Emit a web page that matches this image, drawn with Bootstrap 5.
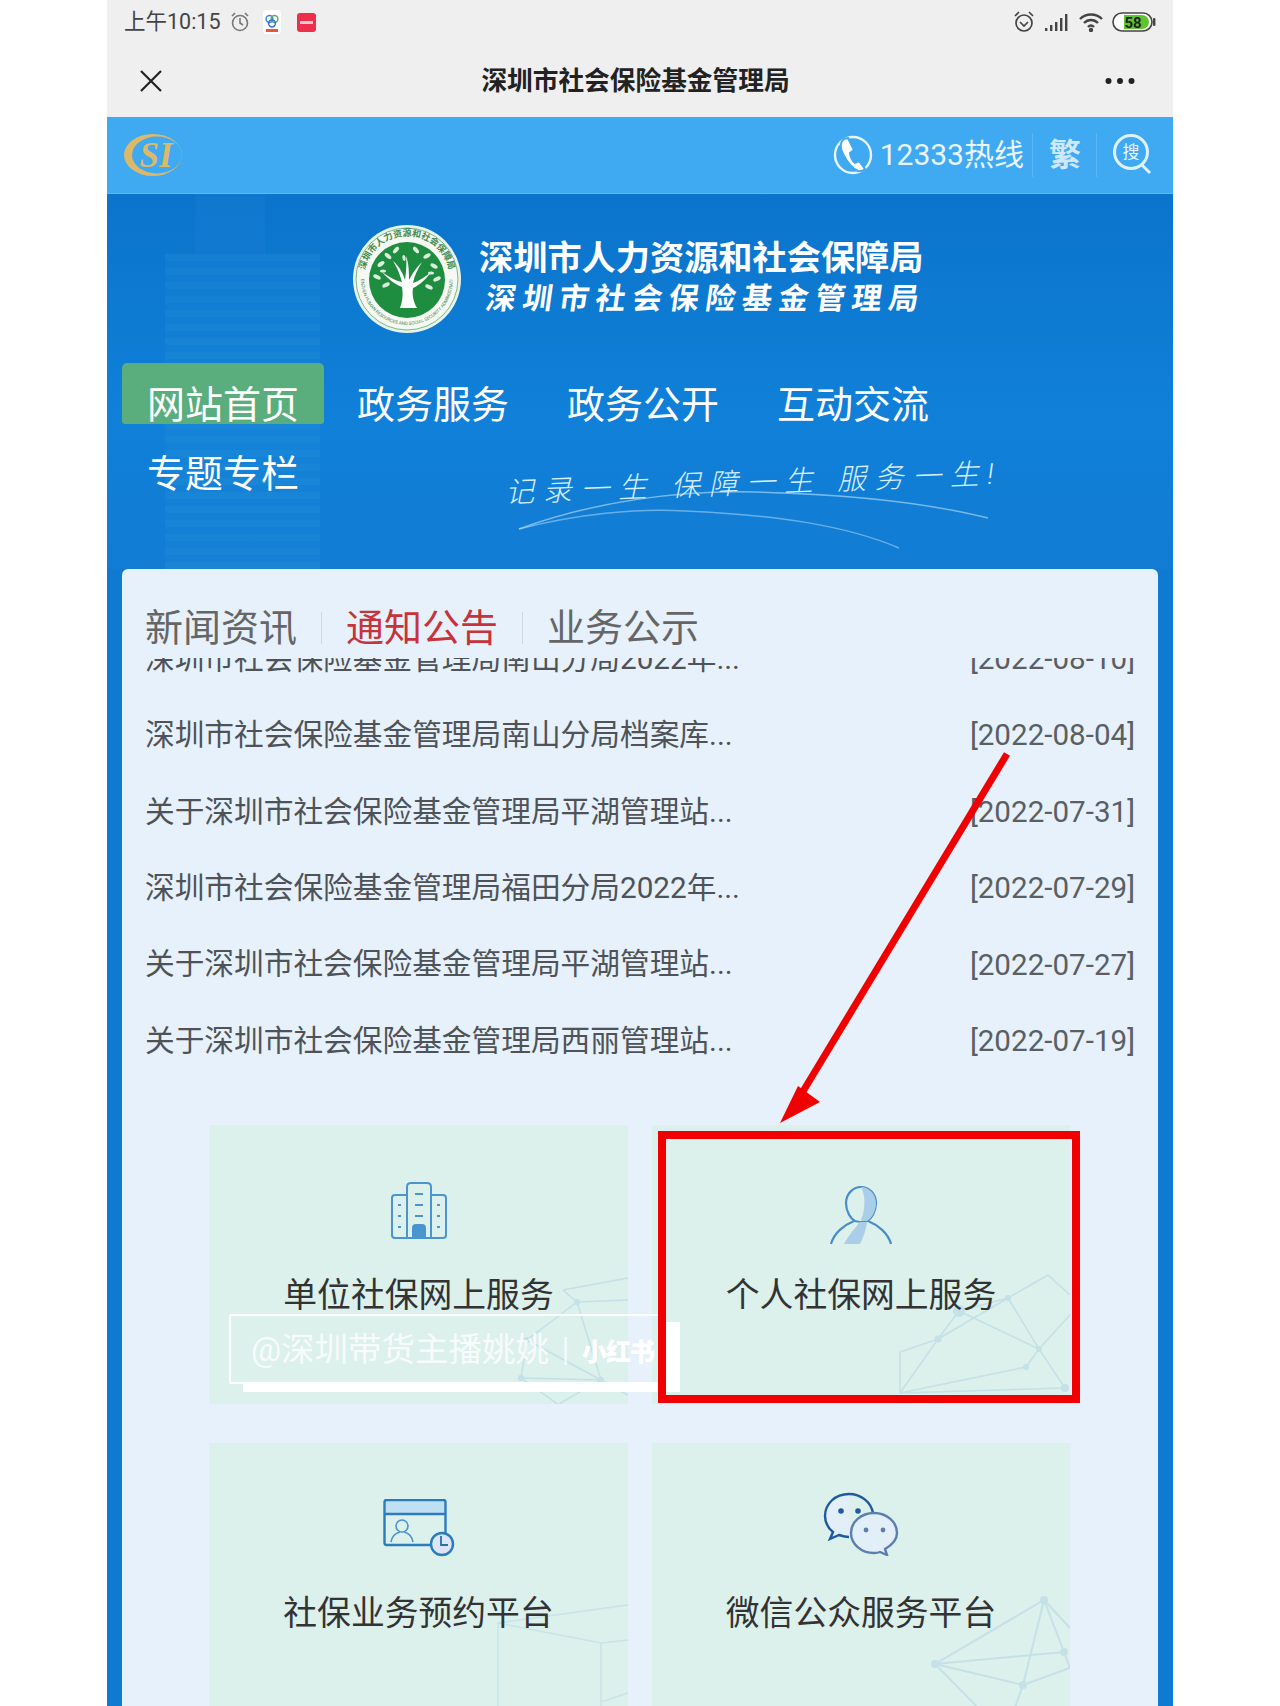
<!DOCTYPE html>
<html lang="zh-CN">
  <head>
    <meta charset="UTF-8" />
    <meta name="viewport" content="width=device-width, initial-scale=1.0" />
    <title>深圳市社会保险基金管理局</title>
    <link href="https://cdn.jsdelivr.net/npm/bootstrap@5.3.2/dist/css/bootstrap.min.css" rel="stylesheet" />
    <style>
      html, body { height: 1706px; overflow: hidden; background: #fff; }
      body { font-family: Roboto, "Noto Sans CJK SC", sans-serif; }
      .phone { position: relative; width: 1066px; height: 1706px; margin: 0 auto; overflow: hidden; background: #0f7ad2; }

      .status-bar { height: 44px; padding: 0 17px; background: #efefef; color: #444; font-size: 21.5px; }
      .status-bar svg { display: block; }
      .title-bar { height: 73px; padding: 0 38px 0 32px; background: #efefef; }
      .title-bar h1 { margin: 2px 0 0 3px; font-size: 25.7px; font-weight: 700; color: #222; }

      .top-bar { height: 77px; padding: 0 20px 0 14px; background: #3fa9f1; border-bottom: 1px solid #62baf5; color: #e9f6ff; }
      .hotline { font-size: 30px; line-height: 1; margin: 0 8px 0 7px; }
      .bar-sep { width: 1px; height: 44px; background: #5cb6f3; }
      .trad { font-size: 32px; font-weight: 700; color: #cfe8fb; margin: 0 15px 0 16px; line-height: 1; }

      .hero { position: relative; height: 375px; padding-top: 31px; background: linear-gradient(180deg, #0b74cc 0%, #1080d8 60%, #127cd4 100%); }
      .hero-towers { position: absolute; left: 58px; top: 60px; width: 155px; height: 320px; opacity: .13;
        background: repeating-linear-gradient(180deg, #49b4d8 0 7px, #2a94d8 7px 14px); }
      .hero-tower-top { position: absolute; left: 88px; top: 0; width: 70px; height: 60px; background: #2a8ad8; opacity: .16; }
      .brand { position: relative; gap: 18px; margin-left: 246px; height: 108px; }
      .brand-names { color: #fff; }
      .brand-name-a { font-size: 34.2px; font-weight: 700; line-height: 40px; }
      .brand-name-b { font-size: 30px; font-weight: 700; line-height: 42px; letter-spacing: 6.6px; margin-left: 4px; transform: skewX(-8deg); transform-origin: left bottom; }

      .main-nav { position: relative; width: 900px; margin: 30px 0 0 15px; }
      .main-nav .nav-link { width: 202px; height: 61px; margin: 0 8px 8px 0; padding: 20px 0 0 25px; border-radius: 5px 5px 3px 3px;
        color: #fff; font-size: 38px; line-height: 44px; white-space: nowrap; }
      .main-nav .nav-link.active { background: #5aad7c; color: #fff; }
      .slogan { position: absolute; left: 398px; top: 268px; color: #d8effc; font-size: 29px; font-weight: 300; font-style: italic; letter-spacing: 8.6px; white-space: nowrap; transform: rotate(-2.2deg); }
      .swoosh { position: absolute; left: 400px; top: 270px; }

      .board { position: relative; width: 1036px; height: 1200px; margin-left: 15px; padding: 39px 23px 0 23px; border-radius: 6px 6px 0 0; background: #e6f1fb; }
      .board-tabs { height: 40px; gap: 0; }
      .board-tabs span { font-size: 38px; line-height: 40px; color: #666; }
      .board-tabs .is-on { color: #c8323a; }
      .tab-sep { width: 1px; height: 32px; margin: 0 24px 0 24px; background: #cdd8e2; }
      .notice-clip { height: 420px; margin-top: 10px; overflow: hidden; }
      .notice-list { margin-top: -37px; background: transparent; }
      .notice-list .list-group-item { display: flex; justify-content: space-between; align-items: center; height: 76.4px; padding: 0; background: transparent; border: 0; color: #4f5357; font-size: 29.7px; }
      .notice-date { font-size: 29.6px; color: #5a5f64; }

      .services { display: grid; grid-template-columns: 419px 418px; gap: 39px 24px; margin: 47px 0 0 64px; }
      .service { position: relative; height: 279px; padding-top: 52px; background: #dcf0ec; overflow: hidden; }
      .service-net { position: absolute; left: 0; top: 0; opacity: .7; }
      .service-icon { position: relative; height: 64px; margin-bottom: 25px; }
      .icon-up { margin-top: -3px; }
      .service-name { position: relative; font-size: 33.8px; line-height: 60px; color: #333; }

      .annot { position: absolute; left: 0; top: 0; }
      .stamp { position: absolute; left: 122px; top: 1314px; width: 437px; height: 70px; padding-left: 20px; border: 2px solid rgba(255,255,255,.9); box-shadow: 14px 8px 0 #fff;
        color: rgba(255,255,255,.8); font-size: 33.5px; line-height: 68px; white-space: nowrap; }
      .stamp b { font-size: 25px; color: #fff; font-weight: 900; letter-spacing: -1px; }
    </style>
  </head>
  <body>
    <div class="phone">
      <!-- status bar -->
      <div class="status-bar d-flex align-items-center justify-content-between">
        <div class="d-flex align-items-center gap-2">
          <span>上午10:15</span>
          <svg width="22" height="22" viewBox="0 0 22 22" fill="none" stroke="#777" stroke-width="1.6"><circle cx="11" cy="12" r="7.5"/><path d="M11 7v5l3 2M3 5l3-3M19 5l-3-3"/></svg>
          <svg width="18" height="24" viewBox="0 0 18 24" class="ms-1"><rect width="18" height="24" rx="4" fill="#fff"/><circle cx="6.5" cy="9" r="3.4" fill="none" stroke="#3a8ad8" stroke-width="1.5"/><circle cx="11.5" cy="9" r="3.4" fill="none" stroke="#5ab06a" stroke-width="1.5"/><circle cx="9" cy="13.5" r="3.4" fill="none" stroke="#3a6ad8" stroke-width="1.5"/><rect x="3" y="19" width="12" height="3" fill="#e2593c"/></svg>
          <svg class="ms-2" width="19" height="19" viewBox="0 0 19 19"><rect width="19" height="19" rx="3" fill="#ee2f4c"/><rect x="3" y="8" width="13" height="3" fill="#fbc6cf"/></svg>
        </div>
        <div class="d-flex align-items-center">
          <svg width="24" height="24" viewBox="0 0 24 24" fill="none" stroke="#444" stroke-width="1.7"><circle cx="12" cy="13" r="8"/><path d="M8 12l4 4 4-4M3 6l4-4M21 6l-4-4"/></svg>
          <svg class="ms-2" width="26" height="18" viewBox="0 0 26 18" fill="#444"><rect x="1" y="15" width="2.4" height="3"/><rect x="6" y="12" width="2.4" height="6"/><rect x="11" y="9" width="2.4" height="9"/><rect x="16" y="5" width="2.4" height="13"/><rect x="21" y="1" width="2.4" height="17"/></svg>
          <svg class="ms-2" width="26" height="20" viewBox="0 0 26 20" fill="none" stroke="#444" stroke-width="2.4"><path d="M2 7c6-6 16-6 22 0M6 11c4-4 10-4 14 0M10 15c2-2 4-2 6 0"/><circle cx="13" cy="18" r="1" fill="#444"/></svg>
          <svg class="ms-2" width="44" height="20" viewBox="0 0 44 20"><rect x="1" y="1" width="39" height="18" rx="9" fill="#fff" stroke="#444" stroke-width="1.6"/><path d="M12 3h18a7 7 0 0 1 0 14H12z" fill="#5fc52e"/><rect x="41" y="6" width="2.4" height="8" rx="1" fill="#444"/><text x="21" y="15.5" text-anchor="middle" font-size="15" font-weight="700" font-family="Roboto" fill="#222">58</text></svg>
        </div>
      </div>

      <!-- wechat title bar -->
      <div class="title-bar d-flex align-items-center justify-content-between">
        <svg width="24" height="24" viewBox="0 0 24 24" stroke="#222" stroke-width="2.2"><path d="M2 2l20 20M22 2L2 22"/></svg>
        <h1>深圳市社会保险基金管理局</h1>
        <svg width="30" height="8" viewBox="0 0 30 8" fill="#222"><circle cx="3.5" cy="4" r="3"/><circle cx="15" cy="4" r="3"/><circle cx="26.5" cy="4" r="3"/></svg>
      </div>

      <!-- site top bar -->
      <div class="top-bar d-flex align-items-center">
        <svg width="64" height="48" viewBox="0 0 64 48">
          <ellipse cx="32" cy="24" rx="29" ry="21" fill="#dcb968"/>
          <ellipse cx="36" cy="24" rx="25" ry="18.5" fill="#3fa9f1"/>
          <text x="35" y="36" text-anchor="middle" font-size="35" font-weight="700" font-style="italic" font-family="Liberation Serif" fill="#dcb968">SI</text>
        </svg>
        <div class="ms-auto d-flex align-items-center">
          <svg width="40" height="40" viewBox="0 0 40 40" fill="none">
            <circle cx="20" cy="20" r="18" stroke="#e9f6ff" stroke-width="2.4"/>
            <path d="M11 4c-4 3-4 9-1 15s8 14 15 17c3 1 5 0 7-2l-6-8-4 2c-2-1-5-7-5-10l4-3-6-12z" fill="#fff" stroke="#3fa9f1" stroke-width="2"/>
          </svg>
          <span class="hotline">12333热线</span>
          <span class="bar-sep"></span>
          <span class="trad">繁</span>
          <span class="bar-sep"></span>
          <svg class="ms-3" width="40" height="44" viewBox="0 0 40 44" fill="none">
            <circle cx="18" cy="19" r="16.5" stroke="#dff1fd" stroke-width="3"/>
            <path d="M29 32l8 8" stroke="#dff1fd" stroke-width="3"/>
            <text x="18" y="25" text-anchor="middle" font-size="17" font-family="Noto Sans CJK SC" fill="#e9f6ff">搜</text>
          </svg>
        </div>
      </div>

      <!-- hero -->
      <div class="hero">
        <div class="hero-towers"></div>
        <div class="hero-tower-top"></div>
        <div class="brand d-flex align-items-center">
          <svg width="108" height="108" viewBox="0 0 108 108">
            <defs><path id="ringTop" d="M11 54a43 43 0 0 1 86 0"/><path id="ringBot" d="M8 54a46 46 0 0 0 92 0"/></defs>
            <circle cx="54" cy="54" r="54" fill="#e8f3ea"/>
            <circle cx="54" cy="54" r="51" fill="#f6f8f3" stroke="#7cb98a" stroke-width="1"/>
            <text font-size="9" font-weight="700" fill="#3f8a52" font-family="Noto Sans CJK SC"><textPath href="#ringTop" startOffset="50%" text-anchor="middle">深圳市人力资源和社会保障局</textPath></text>
            <text font-size="4.6" fill="#3f8a52" font-family="Roboto"><textPath href="#ringBot" startOffset="50%" text-anchor="middle">SHENZHEN HUMAN RESOURCES AND SOCIAL SECURITY ADMINISTRATION</textPath></text>
            <circle cx="54" cy="55" r="38" fill="#1f8d3f"/>
            <path d="M47 83c3-8 3-15 2-21-6-2-14-8-20-15 7 5 14 9 20 10-2-7-4-13-9-21 7 6 10 13 12 19 1-8 2-15 1-24 3 8 3 17 3 24 3-6 7-12 13-18-4 7-8 14-9 21 6-2 12-6 19-12-5 7-12 14-19 17-1 6 0 13 4 20z" fill="#fff"/>
            <g fill="#d9efdb">
              <ellipse cx="28" cy="39" rx="4" ry="2" transform="rotate(-35 28 39)"/><ellipse cx="35" cy="31" rx="4" ry="2" transform="rotate(40 35 31)"/><ellipse cx="43" cy="25" rx="4" ry="2" transform="rotate(-50 43 25)"/><ellipse cx="63" cy="25" rx="4" ry="2" transform="rotate(50 63 25)"/><ellipse cx="74" cy="31" rx="4" ry="2" transform="rotate(-30 74 31)"/><ellipse cx="81" cy="41" rx="4" ry="2" transform="rotate(30 81 41)"/><ellipse cx="24" cy="52" rx="4" ry="2" transform="rotate(25 24 52)"/><ellipse cx="84" cy="54" rx="4" ry="2" transform="rotate(-25 84 54)"/><ellipse cx="33" cy="60" rx="4" ry="2" transform="rotate(-25 33 60)"/><ellipse cx="76" cy="62" rx="4" ry="2" transform="rotate(25 76 62)"/><ellipse cx="30" cy="46" rx="3" ry="1.6"/><ellipse cx="78" cy="48" rx="3" ry="1.6"/><ellipse cx="51" cy="33" rx="3" ry="1.6" transform="rotate(80 51 33)"/>
            </g>
          </svg>
          <div class="brand-names">
            <div class="brand-name-a">深圳市人力资源和社会保障局</div>
            <div class="brand-name-b">深圳市社会保险基金管理局</div>
          </div>
        </div>

        <nav class="main-nav nav">
          <a class="nav-link active" href="#">网站首页</a>
          <a class="nav-link" href="#">政务服务</a>
          <a class="nav-link" href="#">政务公开</a>
          <a class="nav-link" href="#">互动交流</a>
          <a class="nav-link" href="#">专题专栏</a>
        </nav>

        <div class="slogan">记录一生 保障一生 服务一生!</div>
        <svg class="swoosh" width="520" height="90" viewBox="0 0 520 90" fill="none">
          <path d="M12 65C90 36 180 26 247 28c90 2 170 10 234 26" stroke="#bfe2fa" stroke-width="1.5" opacity=".6"/>
          <path d="M12 65C70 50 130 44 178 47c90 4 160 14 214 37" stroke="#bfe2fa" stroke-width="1.5" opacity=".5"/>
        </svg>
      </div>

      <!-- content board -->
      <div class="board">
        <div class="board-tabs d-flex align-items-center">
          <span>新闻资讯</span><i class="tab-sep"></i><span class="is-on">通知公告</span><i class="tab-sep"></i><span>业务公示</span>
        </div>
        <div class="notice-clip">
          <ul class="notice-list list-group list-group-flush">
            <li class="list-group-item"><span>深圳市社会保险基金管理局南山分局2022年...</span><span class="notice-date">[2022-08-10]</span></li>
            <li class="list-group-item"><span>深圳市社会保险基金管理局南山分局档案库...</span><span class="notice-date">[2022-08-04]</span></li>
            <li class="list-group-item"><span>关于深圳市社会保险基金管理局平湖管理站...</span><span class="notice-date">[2022-07-31]</span></li>
            <li class="list-group-item"><span>深圳市社会保险基金管理局福田分局2022年...</span><span class="notice-date">[2022-07-29]</span></li>
            <li class="list-group-item"><span>关于深圳市社会保险基金管理局平湖管理站...</span><span class="notice-date">[2022-07-27]</span></li>
            <li class="list-group-item"><span>关于深圳市社会保险基金管理局西丽管理站...</span><span class="notice-date">[2022-07-19]</span></li>
          </ul>
        </div>

        <div class="services">
          <div class="service d-flex flex-column align-items-center">
            <svg class="service-net" width="419" height="279" viewBox="0 0 419 279" fill="none" stroke="#b9dbe4" stroke-width="1.5">
              <path d="M354 165L419 153M354 165L368 177L419 175M368 177L318 215L312 253L350 280M368 177L392 255L350 279M318 215L392 255M312 253L392 255L419 270"/>
              <g fill="#b9dbe4" stroke="none"><circle cx="368" cy="177" r="3"/><circle cx="318" cy="215" r="3"/><circle cx="312" cy="253" r="3"/><circle cx="392" cy="255" r="3"/></g>
            </svg>
            <div class="service-icon">
              <svg class="mt-1" width="58" height="60" viewBox="0 0 58 60" fill="none" stroke="#4a94cf" stroke-width="2">
                <path d="M17 57V6q0-4 4-4h16q4 0 4 4v51"/>
                <path d="M17 14H5q-3 0-3 3v37q0 3 3 3h48q3 0 3-3V17q0-3-3-3H41"/>
                <path d="M25 13h8M25 24h8M25 35h8M8 24h3M8 35h3M8 46h3M47 24h3M47 35h3M47 46h3"/>
                <path d="M23 57V47q0-3 3-3h6q3 0 3 3v10z" fill="#4a94cf"/>
              </svg>
            </div>
            <div class="service-name">单位社保网上服务</div>
          </div>
          <div class="service d-flex flex-column align-items-center">
            <svg class="service-net" width="418" height="279" viewBox="0 0 418 279" fill="none" stroke="#b9dbe4" stroke-width="1.5">
              <path d="M396 150L356 173L307 186L286 214L248 268M356 173L286 214M307 186L387 224L413 263L248 268M356 173L387 224L374 242L248 268M248 227L286 214M248 227V268M396 150L418 170M387 224L418 190"/>
              <g fill="#b9dbe4" stroke="none"><circle cx="356" cy="173" r="3"/><circle cx="307" cy="186" r="6"/><circle cx="286" cy="214" r="3.5"/><circle cx="387" cy="224" r="3"/><circle cx="374" cy="242" r="3"/><circle cx="413" cy="263" r="4"/></g>
            </svg>
            <div class="service-icon">
              <svg class="mt-2" width="62" height="60" viewBox="0 0 62 60" fill="none" stroke="#4a8cc8" stroke-width="2.2">
                <path d="M31 2c8 0 15 7 15 16s-5 16-9 18c-3 1-9 1-12 0-4-2-9-9-9-18S23 2 31 2z"/>
                <path d="M31 2c8 0 15 7 15 16s-5 16-9 18c-2 0-5 0-6-1 3-6 6-22 0-33z" fill="#aacde8" stroke="none"/>
                <path d="M24 36C14 40 4 48 1 59M38 36c10 4 20 12 23 23"/>
                <path d="M30 37C24 44 19 50 14 59h16c3-6 6-14 7-22z" fill="#aacde8" stroke="none"/>
              </svg>
            </div>
            <div class="service-name">个人社保网上服务</div>
          </div>
          <div class="service d-flex flex-column align-items-center">
            <svg class="service-net" width="419" height="279" viewBox="0 0 419 279" fill="none" stroke="#c0dfe6" stroke-width="1.5">
              <path d="M289 180L419 162M289 180L392 200L419 197M392 200V279M289 180V279M392 259L419 250"/>
            </svg>
            <div class="service-icon">
              <svg class="mt-1" width="72" height="58" viewBox="0 0 72 58">
                <path d="M1.5 3q0-2 2-2h57q2 0 2 2v13h-61z" fill="#bfe0f3"/>
                <path d="M57 46H3.5q-2 0-2-2V3q0-2 2-2h57q2 0 2 2v32M1.5 15h61" fill="none" stroke="#2b7cbd" stroke-width="2.4"/>
                <circle cx="19" cy="27" r="6" fill="none" stroke="#4a94cf" stroke-width="1.6"/>
                <path d="M8 43c1-6 5-9 9-10M30 43c-1-6-5-9-9-10" fill="none" stroke="#4a94cf" stroke-width="1.6"/>
                <circle cx="59" cy="45" r="11" fill="#dbe5f6" stroke="#2b7cbd" stroke-width="2.4"/>
                <path d="M58 37v9h7" fill="none" stroke="#2b6fa8" stroke-width="1.8"/>
              </svg>
            </div>
            <div class="service-name">社保业务预约平台</div>
          </div>
          <div class="service d-flex flex-column align-items-center">
            <svg class="service-net" width="418" height="279" viewBox="0 0 418 279" fill="none" stroke="#bcdce6" stroke-width="2">
              <path d="M392 157L283 221L412 209M392 157L412 209L418 225M392 157L371 242L358 279M283 221L371 242L418 225M283 221L340 279M392 157L418 185"/>
              <g fill="#bcdce6" stroke="none"><circle cx="392" cy="157" r="4"/><circle cx="283" cy="221" r="4"/><circle cx="412" cy="209" r="4"/><circle cx="371" cy="242" r="4"/></g>
            </svg>
            <div class="service-icon">
              <svg class="icon-up" width="76" height="64" viewBox="0 0 76 64" fill="none">
                <path d="M26 2C12 2 2 12 2 24c0 7 3 12 8 16l-3 7 9-4c3 1 7 2 10 2" fill="#e3eff8" stroke="#1d5a9e" stroke-width="2.4"/>
                <path d="M26 2c12 0 22 8 24 19" stroke="#1d5a9e" stroke-width="2.4"/>
                <circle cx="18" cy="19" r="2.8" fill="#1d5a9e"/><circle cx="35" cy="19" r="2.8" fill="#1d5a9e"/>
                <path d="M51 21c-13 0-23 9-23 20s10 20 23 20c2 0 4 0 6-1l7 3-2-6c7-4 12-9 12-16 0-11-10-20-23-20z" fill="#e3eff8" stroke="#5a7fae" stroke-width="2.4"/>
                <circle cx="43" cy="38" r="2.4" fill="#5a7fae"/><circle cx="60" cy="38" r="2.4" fill="#5a7fae"/>
              </svg>
            </div>
            <div class="service-name">微信公众服务平台</div>
          </div>
        </div>
      </div>

      <!-- annotations on top of the screenshot -->
      <div class="stamp">@深圳带货主播姚姚 <span class="mx-1">|</span> <b>小红书</b></div>
      <svg class="annot" width="1066" height="1706" viewBox="0 0 1066 1706" fill="none">
        <rect x="555" y="1135" width="414" height="264" stroke="#f00000" stroke-width="8"/>
        <path d="M900 754L692 1098" stroke="#f00000" stroke-width="7"/>
        <path d="M673 1123L691 1086L713 1102z" fill="#f00000"/>
      </svg>
    </div>
    <script src="https://cdn.jsdelivr.net/npm/bootstrap@5.3.2/dist/js/bootstrap.bundle.min.js"></script>
  </body>
</html>
